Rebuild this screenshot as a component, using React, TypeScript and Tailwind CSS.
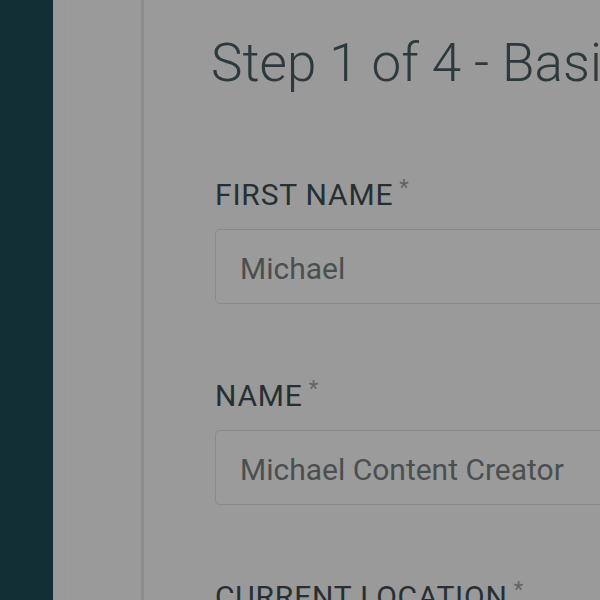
import React from "react";

function Field({ label, value }: { label: string; value?: string }) {
  return (
    <div className="flex flex-col">
      <div className="flex items-start text-[30px] leading-[30px] font-normal text-[#263033] tracking-[0.8px]">
        <span>{label}</span>
        <span className="ml-[6px] text-[22px] leading-[16px] font-normal text-[#5f6566]">*</span>
      </div>
      {value !== undefined && (
        <div className="mt-[19px] flex h-[75px] w-[520px] items-center rounded-[5px] border border-[#8a8a8a] bg-[#9b9b9b] pl-[24px] pt-[4px] text-[30px] leading-[30px] text-[#4b4f50]">
          {value}
        </div>
      )}
    </div>
  );
}

export default function App() {
  return (
    <div
      className="flex h-[600px] w-[600px] overflow-hidden bg-[#999999]"
      style={{ fontFamily: "Roboto, 'Open Sans', sans-serif" }}
    >
      <aside className="h-full w-[53px] shrink-0 bg-[#122f35]" />
      <div className="flex h-full w-[88px] shrink-0 bg-[#9a9a9a] pl-[15px]">
        <div className="h-full w-px bg-[#9d9d9d]" />
      </div>
      <div className="h-full w-[3px] shrink-0 bg-[#8c8c8c]" />
      <main className="flex h-full min-w-0 flex-1 flex-col bg-[#9a9a9a] pl-[71px] pt-[31px]">
        <h1 className="-ml-[4px] whitespace-nowrap text-[53px] leading-[64px] font-light text-[#2d393c]">
          Step 1 of 4 - Basic Information
        </h1>
        <div className="mt-[85px] flex flex-col gap-[77px]">
          <Field label="FIRST NAME" value="Michael" />
          <Field label="NAME" value="Michael Content Creator" />
          <Field label="CURRENT LOCATION" value="" />
        </div>
      </main>
    </div>
  );
}
